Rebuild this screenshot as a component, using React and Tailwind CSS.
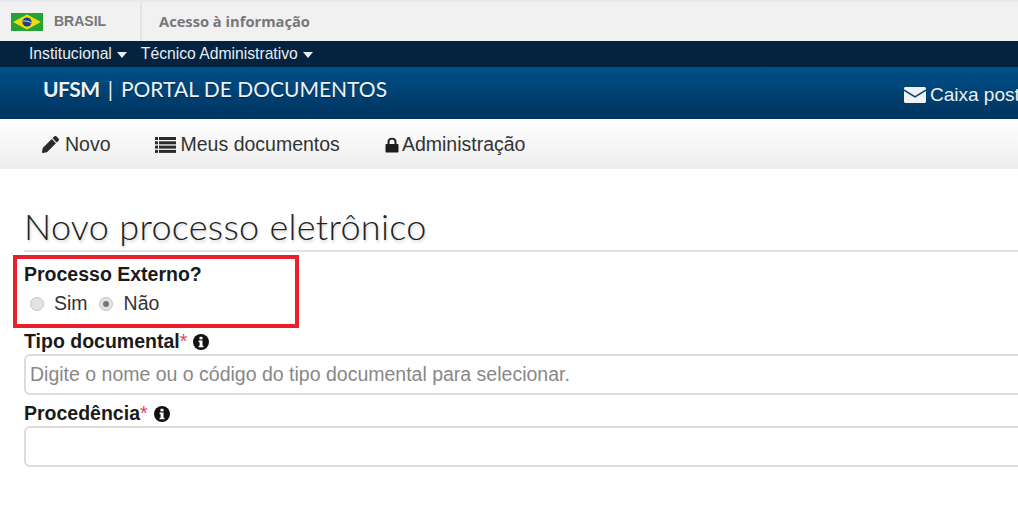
import React from 'react';

const BrazilFlag = () => (
  <svg width="32" height="18" viewBox="0 0 32 18" className="shrink-0">
    <rect width="32" height="18" fill="#25a339" />
    <polygon points="16,1.500 30,9 16,16.500 2,9" fill="#f4dc0c" />
    <circle cx="16" cy="9" r="4.600" fill="#1d3f8a" />
    <path d="M11.800 8.200c3-.6 6.200.1 8.300 1.700" stroke="#fff" strokeWidth="0.8" fill="none" />
  </svg>
);

const Caret = () => (
  <svg width="10" height="6" viewBox="0 0 10 6" className="inline-block ml-[5px] mb-px">
    <polygon points="0,0 10,0 5,6" fill="#e8edf2" />
  </svg>
);

const PencilIcon = () => (
  <svg width="17" height="17" viewBox="0 0 512 512" fill="#2b2b2b">
    <path d="M497.900 142.100l-46.100 46.100c-4.700 4.700-12.300 4.700-17 0l-111-111c-4.700-4.700-4.700-12.300 0-17l46.100-46.100c18.700-18.700 49.100-18.700 67.900 0l60.100 60.100c18.800 18.700 18.800 49.100 0 67.900zM284.200 99.800L21.600 362.400.4 483.900c-2.900 16.400 11.400 30.600 27.800 27.800l121.500-21.300 262.600-262.600c4.700-4.700 4.700-12.300 0-17l-111-111c-4.800-4.700-12.400-4.700-17.100 0z" />
  </svg>
);

const ListIcon = () => (
  <svg width="21" height="16" viewBox="0 0 21 16" fill="#2b2b2b">
    <rect x="0" y="0" width="3" height="3" />
    <rect x="4" y="0" width="17" height="3" />
    <rect x="0" y="4.300" width="3" height="3" />
    <rect x="4" y="4.300" width="17" height="3" />
    <rect x="0" y="8.600" width="3" height="3" />
    <rect x="4" y="8.600" width="17" height="3" />
    <rect x="0" y="12.900" width="3" height="3" />
    <rect x="4" y="12.900" width="17" height="3" />
  </svg>
);

const LockIcon = () => (
  <svg width="14" height="16" viewBox="0 0 14 16" fill="#1c1c1c">
    <path d="M1.500 7h1V4.800C2.500 2.200 4.500.8 7 .8s4.500 1.400 4.500 4V7h1c.6 0 1 .4 1 1v6.500c0 .6-.4 1-1 1h-11c-.6 0-1-.4-1-1V8c0-.6.4-1 1-1zm3 0h5V4.800c0-1.400-1.100-2.200-2.500-2.200s-2.500.8-2.500 2.200V7z" />
  </svg>
);

const MailIcon = () => (
  <svg width="22" height="16" viewBox="0 0 22 16" className="shrink-0">
    <path d="M1.500 0h19c.8 0 1.500.7 1.500 1.500v.7L11 9 0 2.200v-.7C0 .7.700 0 1.500 0z" fill="#f2f2f2" />
    <path d="M0 4l11 6.800L22 4v10.500c0 .8-.7 1.500-1.500 1.500h-19C.7 16 0 15.300 0 14.500V4z" fill="#f2f2f2" />
  </svg>
);

const InfoIcon = () => (
  <svg width="16" height="16" viewBox="0 0 16 16" className="shrink-0">
    <circle cx="8" cy="8" r="8" fill="#111" />
    <rect x="6.500" y="2.800" width="3" height="2.600" fill="#fff" />
    <path d="M5.600 6.600h3.900v5.100h1v1.600H5.600v-1.600h1V8.200h-1z" fill="#fff" />
  </svg>
);

const Radio = ({ checked }) => (
  <span className="w-[14px] h-[14px] rounded-full border border-[#c4c4c4] bg-[#e4e4e4] flex items-center justify-center shrink-0">
    {checked && <span className="w-[6px] h-[6px] rounded-full bg-[#777]" />}
  </span>
);

const FieldLabel = ({ children }) => (
  <div className="flex items-center gap-[6px] h-[25px] text-[19.5px] font-bold text-[#1a1a1a]">
    <span>{children}<span className="text-[#e8434d] font-normal">*</span></span>
    <InfoIcon />
  </div>
);

const App = () => {
  return (
    <div className="relative w-[1018px] h-[514px] overflow-hidden bg-white font-['Liberation_Sans',sans-serif]">
      <div className="h-[41px] bg-[#f1f1f1] border-t-2 border-[#e9e9ed] flex items-center">
        <div className="w-[142px] h-full flex items-center gap-[11px] pl-[11px] border-r-2 border-[#e4e4e4]">
          <BrazilFlag />
          <span className="text-[14px] font-bold text-[#777]">BRASIL</span>
        </div>
        <span className="ml-[17px] text-[14.7px] font-bold text-[#777] font-['Open_Sans',sans-serif]">Acesso à informação</span>
      </div>

      <div className="h-[26px] bg-[#03233f] flex items-center pl-[29px] gap-[14px] text-[15.7px] text-[#e8edf2]">
        <span>Institucional<Caret /></span>
        <span>Técnico Administrativo<Caret /></span>
      </div>

      <div className="relative h-[52px] bg-linear-to-b from-[#00508a] to-[#00345f] flex items-start">
        <div className="pl-[43px] pt-[6px] text-[21px] text-[#eef2f6] font-['Lato',sans-serif] flex items-center whitespace-nowrap [text-shadow:0_1px_1px_rgba(0,0,0,0.4)]">
          <span className="font-bold tracking-[-0.5px]">UFSM</span>
          <span className="mx-[8px]">|</span>
          <span>PORTAL DE DOCUMENTOS</span>
        </div>
        <div className="absolute left-[904px] top-[14px] flex items-center gap-[4px] text-[19px] text-[#eee] whitespace-nowrap">
          <MailIcon />
          <span>Caixa postal</span>
        </div>
      </div>

      <div className="h-[50px] pt-px bg-linear-to-b from-white to-[#ededed] flex items-center pl-[42px] text-[19.5px] text-[#333]">
        <div className="flex items-center gap-[6px]"><PencilIcon /><span>Novo</span></div>
        <div className="flex items-center gap-[5px] ml-[44px]"><ListIcon /><span>Meus documentos</span></div>
        <div className="flex items-center gap-[3px] ml-[45px]"><LockIcon /><span>Administração</span></div>
      </div>

      <div className="pl-[24px]">
        <h1 className="h-[83px] pt-[35px] border-b-2 border-[#e2e2e2] text-[36px] leading-[44px] text-[#222] font-['Lato',sans-serif] font-light tracking-[0.3px] [text-shadow:1px_2px_3px_rgba(0,0,0,0.2)]">
          Novo processo eletrônico
        </h1>
        <div className="mt-[10px] text-[19.5px] leading-[24px] font-bold text-[#1a1a1a]">Processo Externo?</div>
        <div className="mt-[3px] flex items-center h-[30px] pl-[6px] text-[19.5px] text-[#333]">
          <Radio />
          <span className="ml-[10px]">Sim</span>
          <span className="ml-[11px]"><Radio checked /></span>
          <span className="ml-[11px]">Não</span>
        </div>
        <div className="mt-[10px]">
          <FieldLabel>Tipo documental</FieldLabel>
          <div className="h-[41px] -mr-[8px] border-2 border-[#dcdcdc] rounded-[6px] flex items-center pl-[4px] text-[19.5px] text-[#888]">
            Digite o nome ou o código do tipo documental para selecionar.
          </div>
        </div>
        <div className="mt-[6px]">
          <FieldLabel>Procedência</FieldLabel>
          <div className="h-[41px] -mr-[8px] border-2 border-[#dcdcdc] rounded-[6px]" />
        </div>
      </div>

      <div className="absolute left-[13px] top-[255px] w-[286px] h-[73px] border-[4px] border-[#e8202e]" />
    </div>
  );
};

export default App;
